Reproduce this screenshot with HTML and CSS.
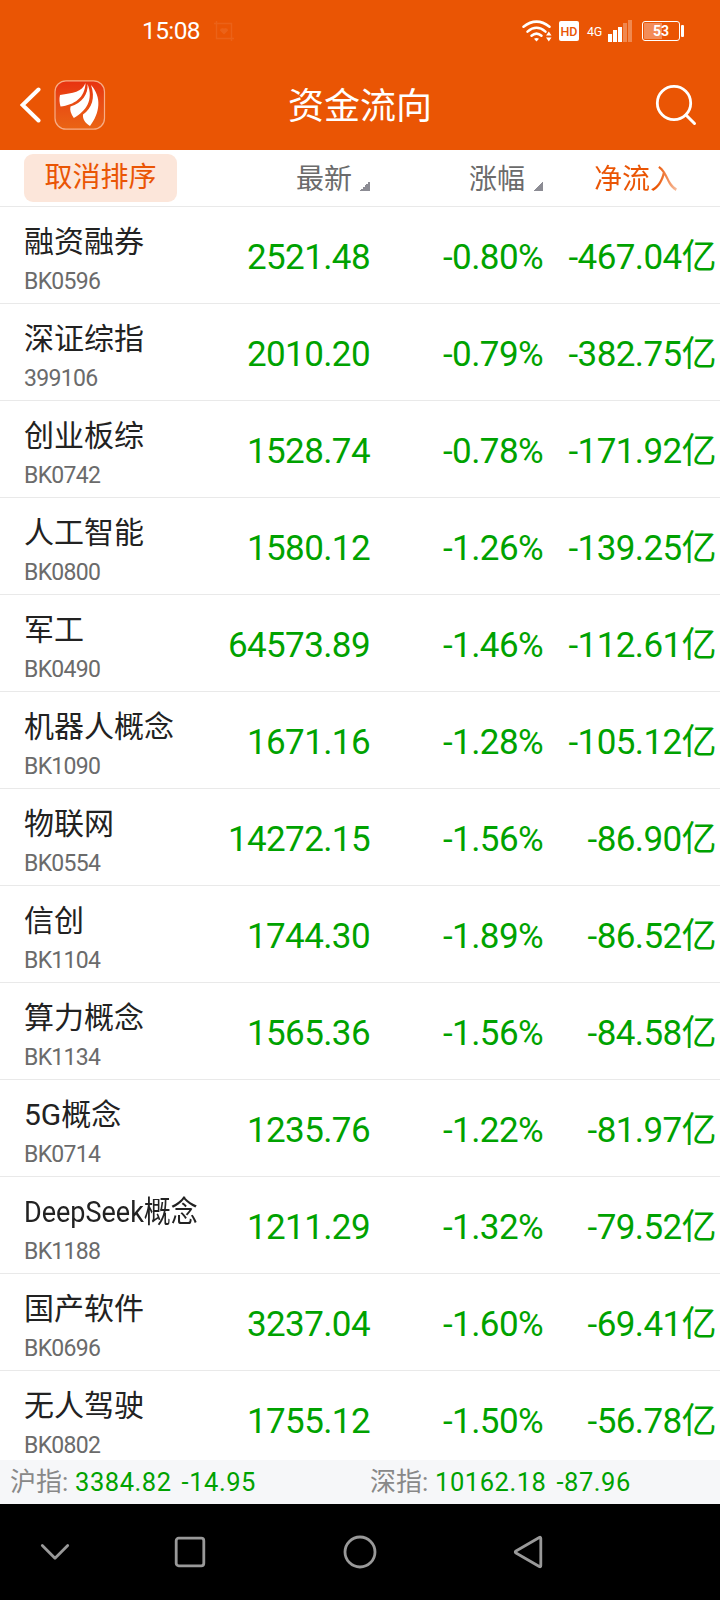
FILE: index.html
```html
<!DOCTYPE html>
<html lang="zh-CN">
<head>
    <meta charset="UTF-8">
    <meta name="viewport" content="width=device-width, initial-scale=1.0">
    <title>资金流向</title>
    <link rel="stylesheet" href="styles.css">
</head>
<body>
    <header class="header">
        <div class="status-bar">
            <span class="time">15:08</span>
            <svg class="crop-icon" width="20" height="20" viewBox="0 0 20 20">
                <path d="M0 2.500H17.500V20M2.500 0V17.500H20" fill="none" stroke="#fff" stroke-width="1.400"/>
                <path d="M10 13.500L6 9.500Q6 6.500 10 7.500Q14 6.500 14 9.500Z" fill="#fff"/>
            </svg>
            <div class="status-icons">
                <svg class="wifi" width="30" height="22" viewBox="0 0 30 22">
                    <g fill="none" stroke="#fff" stroke-width="2.500" stroke-linecap="round">
                        <path d="M1.500 6.800Q14.500 -3.500 27.500 6.800"/>
                        <path d="M5.500 11.600Q14.500 4 23.500 11.600"/>
                        <path d="M9.500 15.800Q14.500 11.500 19.500 15.800"/>
                    </g>
                    <path d="M12 18.800Q14.500 17 17 18.800L14.500 21.500Z" fill="#fff"/>
                    <path d="M24 15.500L26.800 11.500L29.500 15.500ZM24 17.500H29.500L26.800 21.500Z" fill="#fff"/>
                </svg>
                <span class="hd">HD</span>
                <span class="net">4G</span>
                <svg class="signal" width="24" height="22" viewBox="0 0 24 22">
                    <path d="M0 14h4v8h-4zM5 10h4v12h-4zM10 7h4v15h-4z" fill="#fff"/>
                    <path d="M15 3h4v19h-4zM20 0h4v22h-4z" fill="#fff" opacity="0.300"/>
                </svg>
                <span class="battery">53</span>
                <span class="battery-cap"></span>
            </div>
        </div>
        <div class="title-bar">
            <div class="title-left">
                <svg class="back" width="22" height="36" viewBox="0 0 22 36">
                    <path d="M18.500 2.500L2.500 18L18.500 33.500" fill="none" stroke="#fff" stroke-width="4" stroke-linecap="round" stroke-linejoin="miter"/>
                </svg>
                <svg class="logo" width="52" height="50" viewBox="0 0 52 50">
                    <defs>
                        <linearGradient id="logoBg" x1="0" y1="0" x2="0" y2="1">
                            <stop offset="0" stop-color="#e83210"/>
                            <stop offset="0.400" stop-color="#e84a14"/>
                            <stop offset="1" stop-color="#ea6414"/>
                        </linearGradient>
                    </defs>
                    <rect x="1" y="0.800" width="49.500" height="48.400" rx="11" fill="url(#logoBg)" stroke="#f7ad86" stroke-width="1.200"/>
                    <path d="M31.500 3C28 12 19 13 6 15C5 19 5.500 23 6.500 26.500C20 25 31 18 31.500 3Z" fill="#fff"/>
                    <path d="M33.500 4C34.500 14 28 23 16.500 26.500C15.500 30 17 34 19.800 38C32 31 40 20 33.500 4Z" fill="#fff"/>
                    <path d="M37 5C41.500 18 38 28 29 34.500C28.500 39 31 43 36 46C46 33 48 17 37 5Z" fill="#fff"/>
                </svg>
            </div>
            <h1>资金流向</h1>
            <svg class="search" width="42" height="42" viewBox="0 0 42 42">
                <circle cx="19" cy="19" r="16.700" fill="none" stroke="#fff" stroke-width="2.800"/>
                <path d="M31 31L39.500 39.500" stroke="#fff" stroke-width="3" stroke-linecap="round"/>
            </svg>
        </div>
    </header>

    <div class="sort-bar">
        <div class="cancel-sort">取消排序</div>
        <div class="sort-item">最新<i class="arrow"></i></div>
        <div class="sort-item">涨幅<i class="arrow"></i></div>
        <div class="sort-item active">净流入</div>
    </div>

    <main class="list">
        <div class="row">
            <div class="stock"><span class="name">融资融券</span><span class="code">BK0596</span></div>
            <span class="num">2521.48</span><span class="num">-0.80%</span><span class="num">-467.04亿</span>
        </div>
        <div class="row">
            <div class="stock"><span class="name">深证综指</span><span class="code">399106</span></div>
            <span class="num">2010.20</span><span class="num">-0.79%</span><span class="num">-382.75亿</span>
        </div>
        <div class="row">
            <div class="stock"><span class="name">创业板综</span><span class="code">BK0742</span></div>
            <span class="num">1528.74</span><span class="num">-0.78%</span><span class="num">-171.92亿</span>
        </div>
        <div class="row">
            <div class="stock"><span class="name">人工智能</span><span class="code">BK0800</span></div>
            <span class="num">1580.12</span><span class="num">-1.26%</span><span class="num">-139.25亿</span>
        </div>
        <div class="row">
            <div class="stock"><span class="name">军工</span><span class="code">BK0490</span></div>
            <span class="num">64573.89</span><span class="num">-1.46%</span><span class="num">-112.61亿</span>
        </div>
        <div class="row">
            <div class="stock"><span class="name">机器人概念</span><span class="code">BK1090</span></div>
            <span class="num">1671.16</span><span class="num">-1.28%</span><span class="num">-105.12亿</span>
        </div>
        <div class="row">
            <div class="stock"><span class="name">物联网</span><span class="code">BK0554</span></div>
            <span class="num">14272.15</span><span class="num">-1.56%</span><span class="num">-86.90亿</span>
        </div>
        <div class="row">
            <div class="stock"><span class="name">信创</span><span class="code">BK1104</span></div>
            <span class="num">1744.30</span><span class="num">-1.89%</span><span class="num">-86.52亿</span>
        </div>
        <div class="row">
            <div class="stock"><span class="name">算力概念</span><span class="code">BK1134</span></div>
            <span class="num">1565.36</span><span class="num">-1.56%</span><span class="num">-84.58亿</span>
        </div>
        <div class="row">
            <div class="stock"><span class="name">5G概念</span><span class="code">BK0714</span></div>
            <span class="num">1235.76</span><span class="num">-1.22%</span><span class="num">-81.97亿</span>
        </div>
        <div class="row">
            <div class="stock"><span class="name narrow">DeepSeek概念</span><span class="code">BK1188</span></div>
            <span class="num">1211.29</span><span class="num">-1.32%</span><span class="num">-79.52亿</span>
        </div>
        <div class="row">
            <div class="stock"><span class="name">国产软件</span><span class="code">BK0696</span></div>
            <span class="num">3237.04</span><span class="num">-1.60%</span><span class="num">-69.41亿</span>
        </div>
        <div class="row">
            <div class="stock"><span class="name">无人驾驶</span><span class="code">BK0802</span></div>
            <span class="num">1755.12</span><span class="num">-1.50%</span><span class="num">-56.78亿</span>
        </div>
    </main>

    <footer class="index-bar">
        <div class="index"><span class="label">沪指:</span><span>3384.82</span><span class="change">-14.95</span></div>
        <div class="index"><span class="label">深指:</span><span>10162.18</span><span class="change">-87.96</span></div>
    </footer>

    <nav class="nav-bar">
        <svg width="30" height="32" viewBox="0 0 30 32"><path d="M2.300 9.500L15 22.300L27.700 9.500"/></svg>
        <svg width="32" height="32" viewBox="0 0 32 32"><rect x="2.200" y="2.200" width="27.600" height="27.600" rx="2.500"/></svg>
        <svg width="34" height="34" viewBox="0 0 34 34"><circle cx="17" cy="17" r="15"/></svg>
        <svg width="30" height="34" viewBox="0 0 30 34"><path d="M26.300 2.500Q27.800 1.600 27.800 3.500V30.500Q27.800 32.400 26.300 31.500L3 18Q1.500 17 3 16Z"/></svg>
    </nav>
</body>
</html>
```
FILE: styles.css
```css
* {
    box-sizing: border-box;
}
body {
    margin: 0;
    width: 720px;
    height: 1600px;
    overflow: hidden;
    display: flex;
    flex-direction: column;
    background: #fff;
    font-family: Roboto, "Noto Sans CJK SC", sans-serif;
}
svg {
    display: block;
    flex: none;
}

/* header */
.header {
    height: 150px;
    flex: none;
    background: #ea5504;
    color: #fff;
}
.status-bar {
    height: 60px;
    display: flex;
    align-items: center;
    padding: 2px 36px 0 142px;
}
.time {
    font-size: 24.5px;
    line-height: 28px;
    letter-spacing: -0.6px;
    width: 72px;
}
.crop-icon {
    opacity: 0.08;
}
.status-icons {
    margin-left: auto;
    display: flex;
    align-items: center;
}
.hd {
    width: 20px;
    height: 20px;
    margin-left: 7px;
    border-radius: 2px;
    background: #fff;
    color: #ea5504;
    font-size: 12.5px;
    font-weight: 500;
    line-height: 21px;
    text-align: center;
}
.net {
    width: 21px;
    margin-left: 8px;
    font-size: 12.5px;
    letter-spacing: -0.4px;
}
.battery {
    width: 38px;
    height: 20px;
    margin-left: 10px;
    border: 1.5px solid #fff;
    border-radius: 3px;
    background: linear-gradient(to right, #f38c58 53%, transparent 53%) content-box;
    padding: 1px;
    font-size: 14px;
    font-weight: 700;
    line-height: 17px;
    text-align: center;
}
.battery-cap {
    width: 3px;
    height: 12px;
    margin-left: 1px;
    border-radius: 1px;
    background: #fff;
}
.title-bar {
    height: 90px;
    display: grid;
    grid-template-columns: 1fr auto 1fr;
    align-items: center;
    padding: 0 23px 0 20px;
}
.title-left {
    display: flex;
    align-items: center;
    gap: 12px;
}
.title-bar h1 {
    margin: 4px 0 0 3px;
    font-size: 36px;
    font-weight: 400;
    line-height: 50px;
}
.search {
    justify-self: end;
}

/* column headings and rows share the same columns */
.sort-bar,
.row {
    display: grid;
    grid-template-columns: 200px 146px 173px 173px;
    padding-left: 24px;
    align-items: center;
    border-bottom: 1px solid #e9e9e9;
    flex: none;
}
.sort-bar {
    height: 57px;
    font-size: 28px;
    line-height: 40px;
    color: #6b6b6b;
}
.cancel-sort {
    width: 153px;
    height: 48px;
    border-radius: 9px;
    background: #fce6da;
    color: #ea5504;
    line-height: 48px;
    text-align: center;
}
.sort-item {
    display: flex;
    justify-content: flex-end;
    align-items: center;
    padding-top: 3px;
}
.arrow {
    width: 10px;
    height: 10px;
    margin: 12px 0 0 8px;
    background: linear-gradient(135deg, transparent 50%, #8c8c94 50%);
}
.sort-item.active {
    justify-content: flex-start;
    padding-left: 51px;
    color: transparent;
    background: linear-gradient(to right, #ea5504 114px, rgba(234, 85, 4, 0) 146px);
    -webkit-background-clip: text;
    background-clip: text;
}
.list {
    height: 1253px;
    overflow: hidden;
    flex: none;
}
.row {
    height: 97px;
}
.stock {
    display: flex;
    flex-direction: column;
    align-items: flex-start;
    padding-top: 8px;
}
.name {
    font-size: 30px;
    line-height: 42px;
    color: #222;
    white-space: nowrap;
}
.narrow {
    transform: scaleX(0.9);
    transform-origin: left;
}
.code {
    font-size: 23px;
    line-height: 30px;
    letter-spacing: -0.7px;
    margin-top: 4px;
    color: #6b6b6b;
}
.num {
    padding-top: 5px;
    font-size: 35px;
    line-height: 48px;
    letter-spacing: -0.6px;
    text-align: right;
    color: #00a200;
    white-space: nowrap;
}

/* bottom index ticker */
.index-bar {
    height: 44px;
    flex: none;
    display: grid;
    grid-template-columns: 1fr 1fr;
    align-items: center;
    background: #f6f7f9;
}
.index {
    display: flex;
    padding-left: 10px;
    font-size: 25.5px;
    line-height: 36px;
    letter-spacing: 0.55px;
    color: #00a200;
}
.label {
    width: 65px;
    font-size: 26px;
    letter-spacing: 0;
    color: #888;
}
.change {
    margin-left: 10px;
}

/* system navigation */
.nav-bar {
    height: 96px;
    flex: none;
    display: grid;
    grid-template-columns: 110px 160px 180px 156px;
    align-items: center;
    justify-items: center;
    background: #000;
}
.nav-bar svg {
    fill: none;
    stroke: #999;
    stroke-width: 2.8;
    stroke-linecap: round;
    stroke-linejoin: round;
}
```
